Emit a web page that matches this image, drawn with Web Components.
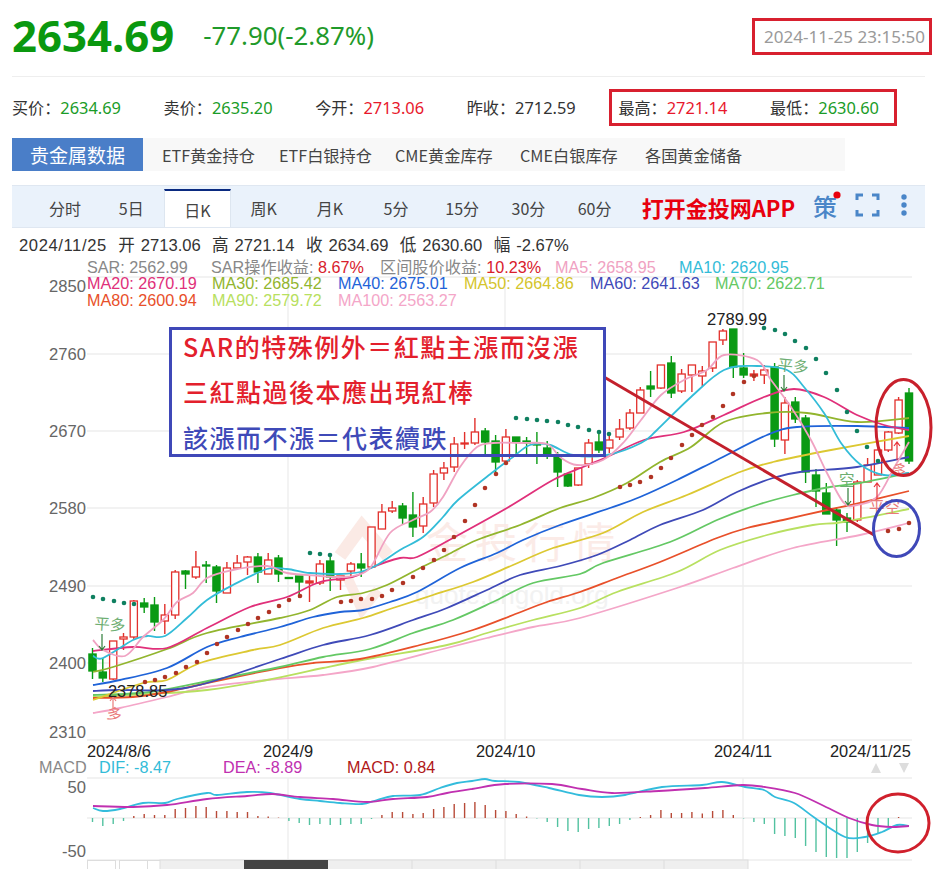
<!DOCTYPE html>
<html lang="zh">
<head>
<meta charset="utf-8">
<title>黄金行情</title>
<style>
  html, body { margin: 0; height: 869px; overflow: hidden; background: #fff; }
</style>
</head>
<body>
<gold-page>
  <quote-head price="2634.69" change="-77.90(-2.87%)" time="2024-11-25 23:15:50"></quote-head>
  <quote-stats>
    <stat-item label="买价" tone="down">2634.69</stat-item>
    <stat-item label="卖价" tone="down">2635.20</stat-item>
    <stat-item label="今开" tone="up">2713.06</stat-item>
    <stat-item label="昨收">2712.59</stat-item>
    <stat-item slot="marked" label="最高" tone="up">2721.14</stat-item>
    <stat-item slot="marked" label="最低" tone="down">2630.60</stat-item>
  </quote-stats>
  <metal-tabs title-text="贵金属数据">
    <span>ETF黄金持仓</span><span>ETF白银持仓</span><span>CME黄金库存</span><span>CME白银库存</span><span>各国黄金储备</span>
  </metal-tabs>
  <period-bar></period-bar>
  <day-info></day-info>
  <k-chart>
    <note-box>
      <span style="color:#e3202c">SAR的特殊例外＝紅點主漲而沒漲</span>
      <span style="color:#e3202c">三紅點過後本應出現紅棒</span>
      <span style="color:#3f4ab8">該漲而不漲＝代表續跌</span>
    </note-box>
  </k-chart>
</gold-page>

<script>
const CJK = '"Noto Sans CJK SC", "Noto Sans", sans-serif';
const ARIAL = '"Liberation Sans", "Noto Sans CJK SC", sans-serif';

class GoldPage extends HTMLElement {
  constructor() {
    super();
    this.attachShadow({ mode: "open" });
    this.shadowRoot.innerHTML = `
      <style>
        :host { display: block; width: 913px; padding: 0 19px 0 12px; font-family: ${CJK}; color: #333; }
      </style>
      <slot></slot>`;
  }
}

class QuoteHead extends HTMLElement {
  constructor() {
    super();
    this.attachShadow({ mode: "open" });
    this.shadowRoot.innerHTML = `
      <style>
        :host { display: flex; align-items: center; height: 76px; border-bottom: 1px solid #eee; }
        .price { font: 700 43.7px/1 "Noto Sans", sans-serif; color: #0a980f; margin-top: -4px; }
        .change { font: 400 25.8px/1 "Noto Sans", sans-serif; color: #1f9a2a; margin: -4px 0 0 29px; }
        .time {
          margin: -4px -7px 0 auto; padding: 0 4px 0 9px; height: 31px;
          border: 3px solid #d8202f; color: #9a9a9a; font: 400 17.05px/31px "Noto Sans", sans-serif;
        }
      </style>
      <span class="price"></span><span class="change"></span><span class="time"></span>`;
  }
  connectedCallback() {
    this.shadowRoot.querySelector(".price").textContent = this.getAttribute("price");
    this.shadowRoot.querySelector(".change").textContent = this.getAttribute("change");
    this.shadowRoot.querySelector(".time").textContent = this.getAttribute("time");
  }
}

class QuoteStats extends HTMLElement {
  constructor() {
    super();
    this.attachShadow({ mode: "open" });
    this.shadowRoot.innerHTML = `
      <style>
        :host { display: flex; align-items: center; height: 61px; }
        .marked { display: flex; position: relative; }
        /* red hand-drawn frame over the two values */
        .marked::after {
          content: ""; position: absolute; left: -9px; top: -7px; width: 282px; height: 31px; border: 3px solid #d8202f;
        }
      </style>
      <slot></slot>
      <div class="marked"><slot name="marked"></slot></div>`;
  }
}

class StatItem extends HTMLElement {
  constructor() {
    super();
    this.attachShadow({ mode: "open" });
    this.shadowRoot.innerHTML = `
      <style>
        :host { display: block; flex: 0 0 151.6px; width: 151.6px; font-size: 16.1px; line-height: 22px; color: #333; white-space: nowrap; }
        .val { font-family: "Noto Sans", sans-serif; font-size: 16.4px; color: #333; }
        :host([tone="up"]) .val { color: #e8182c; }
        :host([tone="down"]) .val { color: #1a9c28; }
      </style>
      <span class="lab"></span><span class="val"><slot></slot></span>`;
  }
  connectedCallback() {
    this.shadowRoot.querySelector(".lab").textContent = this.getAttribute("label") + "：";
  }
}

class MetalTabs extends HTMLElement {
  constructor() {
    super();
    this.attachShadow({ mode: "open" });
    this.shadowRoot.innerHTML = `
      <style>
        :host { display: flex; align-items: center; width: 833px; height: 33px; background: #f8f8f8; font-size: 16.2px; color: #444; white-space: nowrap; }
        .title {
          width: 131px; height: 33px; line-height: 33px; text-align: center; background: #4a7ec8;
          color: #fff; font-size: 19px; margin-right: 19px; flex: none;
        }
        .items { display: grid; grid-template-columns: 117px 116px 125px 125px auto; }
      </style>
      <div class="title"></div>
      <div class="items"><slot></slot></div>`;
  }
  connectedCallback() {
    this.shadowRoot.querySelector(".title").textContent = this.getAttribute("title-text");
  }
}

class PeriodBar extends HTMLElement {
  constructor() {
    super();
    this.attachShadow({ mode: "open" });
    const periods = ["分时", "5日", "日K", "周K", "月K", "5分", "15分", "30分", "60分"];
    const items = periods.map((p) => `<span class="p${p === "日K" ? " on" : ""}">${p}</span>`).join("");
    this.shadowRoot.innerHTML = `
      <style>
        :host {
          display: flex; align-items: flex-end; height: 41px; margin-top: 14px; padding-left: 20px;
          background: #eaf2fb; border-top: 1px solid #dfe7f1; border-bottom: 1px solid #dfe7f1; font-size: 16px; color: #444;
        }
        .p { width: 66.2px; height: 38px; line-height: 38px; text-align: center; box-sizing: border-box; padding-bottom: 4px; }
        .on { background: #fff; border-top: 2px solid #0a2a80; border-left: 1px solid #dde6f0; border-right: 1px solid #dde6f0; padding-bottom: 0; }
        .app { align-self: center; margin-left: 14px; font-size: 22px; font-weight: 700; color: #e8000e; white-space: nowrap; }
        svg { display: block; align-self: stretch; margin-left: auto; flex: none; }
      </style>
      ${items}
      <span class="app">打开金投网APP</span>
      <svg width="116" height="41" viewBox="0 0 116 41">
        <text x="4" y="30" font-size="24" font-weight="500" fill="#4a86c8" font-family='"Noto Sans CJK SC", sans-serif'>策</text>
        <circle cx="28" cy="9" r="3.6" fill="#e8000e"/>
        <path d="M48 14V9H54M63 9H69V14M69 24V29H63M54 29H48V24" fill="none" stroke="#4a86c8" stroke-width="3"/>
        <g fill="#4a86c8"><circle cx="95" cy="11" r="2.7"/><circle cx="95" cy="19" r="2.7"/><circle cx="95" cy="27" r="2.7"/></g>
      </svg>`;
  }
}

class DayInfo extends HTMLElement {
  constructor() {
    super();
    this.attachShadow({ mode: "open" });
    const parts = [["开", "2713.06"], ["高", "2721.14"], ["收", "2634.69"], ["低", "2630.60"], ["幅", "-2.67%"]];
    this.shadowRoot.innerHTML = `
      <style>
        :host { display: flex; align-items: center; gap: 11.3px; height: 20px; padding: 8px 0 0 7px; font: 16.6px/20px ${ARIAL}; color: #333; white-space: nowrap; }
        .date { letter-spacing: .6px; }
        .g { display: flex; gap: 6px; }
      </style>
      <span class="date">2024/11/25</span>
      ${parts.map((p) => `<span class="g"><span>${p[0]}</span><span>${p[1]}</span></span>`).join("")}`;
  }
}

class NoteBox extends HTMLElement {
  constructor() {
    super();
    this.attachShadow({ mode: "open" });
    this.shadowRoot.innerHTML = `
      <style>
        :host {
          position: absolute; left: 169px; top: 71px; width: 437px; height: 130px; box-sizing: border-box;
          border: 3px solid #3f48b8; padding-left: 11px; display: flex; flex-direction: column; justify-content: center;
          font: 500 25px/45.5px "Noto Sans CJK TC", "Noto Sans CJK SC", sans-serif; letter-spacing: 1.5px;
        }
        ::slotted(span) { display: block; white-space: nowrap; }
      </style>
      <slot></slot>`;
  }
}

// candle data, read off in page pixels: type, body top, body bottom, high, low
const CANDLES = [
  ["g",654,671,648,679],["g",672,678,658,682],["r",641,679,641,680],["r",637,639,633,650],["r",601,637,600,640],
  ["g",603,607,598,613],["g",605,622,597,631],["r",615,621,604,634],["r",572,615,570,619],["g",571,574,570,589],
  ["r",567,577,551,579],["g",565,566,561,583],["g",567,591,565,603],["r",568,593,562,593],["r",563,568,555,568],
  ["r",557,562,556,575],["g",557,572,553,583],["r",560,574,553,574],["g",558,574,555,582],["g",577.5,578.5,577,579],
  ["g",576,582,576,598],["R",581,583,575,602],["r",564,583,560,585],["g",561,577,553,591],["r",576,580,576,590],
  ["r",564,571,562,577],["g",564,568,553,577],["r",527,567,527,568],["r",512,529,504,529],["r",508,511,501,513],
  ["g",506,518,503,525],["g",515,527,492,537],["r",504,526,497,533],["r",474,503,470,507],["r",468,473,462,480],
  ["r",444,467,437,472],["r",443,444,432,449],["r",432,443,418,445],["g",431,442,428,455],["g",441,462,435,472],
  ["r",437,461,429,465],["g",437,442,437,455],["g",441,443,437,455],["g",444,445,432,464],["g",448,455,441,459],
  ["g",457,472,452,487],["g",474,486,474,487],["r",468,485,468,486],["r",443,464,439,468],["g",442,450,431,453],
  ["r",440,448,432,453],["r",429,437,419,440],["r",413,428,409,430],["r",390,413,387,413],["g",386,389,371,397],
  ["r",365,388,365,389],["g",363,393,356,398],["r",374,391,369,393],["r",365,375,365,392],["r",371,376,366,386],
  ["r",342,368,342,372],["r",331,340,329,345],["g",329,367,329,378],["g",368,375,353,378],["R",374,376,370,381],
  ["r",370,375,365,384],["g",367,439,363,447],["r",403,440,397,454],["g",402,419,397,423],["g",418,472,415,483],
  ["g",475,491,469,507],["g",493,514,483,514],["g",510,520,507,546],["g",518,522,513,532],["r",482,520,480,522],
  ["r",465,482,458,482],["r",450,475,442,475],["r",432,450,431,452],["r",400,433,397,434],["g",393,461,388,464],
];

// moving averages as hand-read control points, smoothed when drawn
const MAS = [
  ["#f4a6c8", [[93,713],[120,708],[167,697],[207,687],[267,680],[323,675],[373,667],[447,648],[487,638],[533,627],[580,618],[677,588],[733,568],[793,548],[860,535],[909,523]]],
  ["#b8e060", [[93,697],[167,693],[207,690],[267,680],[323,668],[373,658],[447,645],[487,633],[533,620],[580,608],[617,592],[677,572],[720,550],[767,535],[813,525],[843,522],[909,509]]],
  ["#e8502a", [[93,698],[133,697],[167,692],[207,683],[280,668],[313,663],[360,659],[420,645],[473,630],[513,615],[547,602],[580,592],[617,578],[660,562],[717,538],[747,528],[783,520],[827,510],[860,503],[909,491]]],
  ["#64c864", [[93,695],[150,692],[213,680],[280,667],[323,657],[370,649],[413,633],[453,620],[493,602],[533,583],[580,574],[603,563],[670,542],[717,520],[757,505],[793,495],[830,487],[860,483],[909,473]]],
  ["#3f4ab8", [[93,691],[120,690],[167,690],[207,683],[280,659],[323,645],[370,635],[413,620],[447,608],[487,590],[520,575],[560,566],[597,555],[630,540],[660,525],[703,510],[737,492],[773,478],[800,472],[857,467],[909,457]]],
  ["#dcc832", [[93,700],[143,683],[167,680],[200,663],[253,650],[280,645],[323,628],[363,618],[393,608],[433,595],[473,582],[513,565],[553,548],[603,533],[643,512],[687,495],[740,472],[773,462],[831,450],[909,436]]],
  ["#1f63d8", [[93,685],[120,680],[167,668],[207,647],[240,637],[280,627],[313,617],[340,612],[363,610],[390,602],[417,592],[460,568],[497,553],[523,540],[560,525],[610,508],[640,497],[677,480],[717,460],[767,435],[797,427],[857,426],[909,428]]],
  ["#92b52e", [[93,672],[113,667],[167,649],[207,633],[280,618],[310,610],[337,597],[363,593],[387,585],[420,568],[447,555],[477,540],[520,525],[560,508],[593,498],[627,483],[660,462],[691,447],[724,422],[767,413],[807,413],[857,422],[909,418]]],
  ["#e0307a", [[93,651],[133,647],[167,648],[207,628],[250,607],[287,597],[320,582],[353,577],[373,567],[400,558],[417,557],[453,538],[507,508],[553,480],[583,467],[607,457],[644,440],[684,432],[724,415],[764,397],[794,389],[824,397],[857,415],[884,425],[909,430]]],
  ["#33bcd8", [[93,656],[103,658],[133,640],[147,636],[165,636],[187,618],[207,600],[233,585],[267,569],[287,569],[310,573],[340,574],[360,572],[377,565],[400,550],[423,537],[443,517],[458,500],[493,472],[513,457],[530,445],[550,445],[573,455],[607,455],[641,443],[657,430],[691,397],[724,370],[757,366],[787,370],[804,387],[824,413],[841,443],[861,465],[884,475],[909,473]]],
  ["#f0a2c2", [[93,640],[103,650],[125,656],[143,637],[163,620],[177,602],[193,593],[207,578],[233,570],[267,566],[287,573],[320,576],[340,577],[353,576],[370,568],[390,533],[413,520],[430,512],[443,497],[460,467],[477,447],[493,443],[520,443],[547,444],[560,457],[577,465],[603,460],[624,442],[641,420],[661,395],[684,380],[707,370],[724,355],[757,360],[771,380],[791,407],[811,440],[827,473],[844,503],[857,505],[877,497],[894,468],[909,442]]],
];

const SAR_GREEN = [[93,597],[103,599],[114,601],[124,603],[134,604],[310,553],[320,554],[330,555],[516,418],[527,419],[537,420],[547,421],[558,422],[568,425],[578,427],[589,430],[599,432],[609,434],[764,328],[775,330],[785,334],[795,341],[806,348],[816,359],[826,373],[837,390],[847,412],[857,431],[867,447],[878,461]];
const SAR_RED = [[145,682],[155,680],[165,677],[176,673],[186,667],[197,662],[207,653],[217,644],[227,637],[238,630],[248,624],[258,618],[269,612],[279,606],[289,600],[300,596],[341,602],[351,601],[361,599],[372,599],[382,596],[392,590],[403,583],[413,577],[423,568],[434,560],[444,550],[454,537],[465,521],[475,505],[485,488],[496,474],[506,463],[620,487],[630,485],[640,482],[651,477],[661,468],[671,458],[682,445],[692,435],[702,425],[713,417],[723,406],[733,394],[744,382],[754,376],[888,531],[899,529],[909,523]];

const DIF = [[93,808],[103,811],[120,809],[143,803],[165,803],[177,799],[207,793],[217,795],[247,792],[270,793],[300,799],[320,801],[340,803],[362,804],[377,800],[393,796],[420,795],[440,788],[457,783],[472,781],[485,779],[495,781],[519,782],[549,788],[579,795],[602,797],[625,795],[662,787],[702,785],[722,782],[745,787],[764,790],[775,797],[794,803],[815,818],[845,837],[865,837],[882,832],[897,825],[909,826]];
const DEA = [[93,806],[133,807],[167,805],[207,799],[247,796],[273,794],[300,797],[333,799],[367,802],[393,799],[427,797],[447,793],[472,789],[505,784],[552,784],[582,789],[612,793],[659,791],[705,788],[742,785],[765,787],[795,793],[822,805],[849,818],[872,825],[892,827],[909,826]];

// MACD histogram, pixels below (+) or above (-) the zero line, one per candle
const BARS = [4,8,6,3,-2,-4,-3,-3,-9,-10,-12,-11,-7,-7,-6,-6,-2,-1.5,-.4,3,5,7,6,7,7,6,6,1,-3,-6,-6,-4,-5,-9,-11,-14,-15,-16,-13,-8,-7,-4,-1.5,.5,4,9,13,14,11,10,8,6,2,-1,-3,-8,-5,-5,-6,-4.5,-7,-8,-3,.5,4,6,16,18,20,28,34,39,40,40,34,25,15,8,-1,0];

function smooth(pts) {
  let d = `M${pts[0][0]} ${pts[0][1]}`;
  for (let i = 0; i < pts.length - 1; i++) {
    const p0 = pts[i - 1] || pts[i], p1 = pts[i], p2 = pts[i + 1], p3 = pts[i + 2] || p2;
    const c1x = p1[0] + (p2[0] - p0[0]) / 6, c1y = p1[1] + (p2[1] - p0[1]) / 6;
    const c2x = p2[0] - (p3[0] - p1[0]) / 6, c2y = p2[1] - (p3[1] - p1[1]) / 6;
    d += `C${c1x.toFixed(1)} ${c1y.toFixed(1)} ${c2x.toFixed(1)} ${c2y.toFixed(1)} ${p2[0]} ${p2[1]}`;
  }
  return d;
}

const candleX = (i) => 92.5 + i * 10.335;

class KChart extends HTMLElement {
  constructor() {
    super();
    this.attachShadow({ mode: "open" });
    this.shadowRoot.innerHTML = `
      <style>
        :host { display: block; position: relative; width: 944px; height: 613px; margin-left: -12px; }
        svg { display: block; font-family: ${ARIAL}; }
        text { white-space: pre; }
      </style>
      <svg width="944" height="613" viewBox="0 256 944 613">${this.drawing()}</svg>
      <slot></slot>`;
  }

  label(x, y, txt, fill, size = 16.2, anchor = "start") {
    return `<text x="${x}" y="${y}" fill="${fill}" font-size="${size}" text-anchor="${anchor}">${txt}</text>`;
  }

  grid() {
    let s = `<g stroke="#eeeeee" stroke-width="1.4" fill="none">`;
    [277, 354, 431, 508, 586, 663, 740, 778, 818, 860].forEach((y) => { s += `<path d="M87 ${y}H912"/>`; });
    [288, 505, 743].forEach((x) => { s += `<path d="M${x} 277V740M${x} 778V860"/>`; });
    s += `</g>`;
    // the pasted note hides the grid, the candles were drawn back over it
    s += `<rect x="169" y="327" width="437" height="130" fill="#fff"/>`;
    return s;
  }

  watermark() {
    return `<g opacity=".9">
      <path d="M340 556L362 526L388 556" fill="none" stroke="#fbe8e3" stroke-width="13"/>
      <path d="M345 572L362 610L378 590" fill="none" stroke="#fbe8e3" stroke-width="10"/>
      <text x="426" y="558" font-size="42" letter-spacing="7" fill="#fbe9e5" font-family='"Noto Sans CJK SC", sans-serif'>金投行情</text>
      <text x="415" y="604" font-size="26" fill="#f1f1f1">quote.cngold.org</text>
    </g>`;
  }

  candles() {
    return CANDLES.map((c, i) => {
      const x = candleX(i).toFixed(1), col = c[0] === "g" ? "#0a9a14" : "#e2302c";
      const w = `<path d="M${x} ${c[3]}V${c[4]}" stroke="${col}" stroke-width="1.4"/>`;
      const fill = c[0] === "r" ? "#fff" : col;
      const h = Math.max(c[2] - c[1], 1);
      return w + `<rect x="${(x - 3.6).toFixed(1)}" y="${c[1]}" width="7.2" height="${h}" fill="${fill}" stroke="${col}" stroke-width="1.3"/>`;
    }).join("");
  }

  lines() {
    return MAS.map((m) => `<path d="${smooth(m[1])}" fill="none" stroke="${m[0]}" stroke-width="1.8"/>`).join("");
  }

  dots() {
    const dot = (p, c) => `<circle cx="${p[0]}" cy="${p[1]}" r="2.3" fill="${c}"/>`;
    return SAR_GREEN.map((p) => dot(p, "#0f8060")).join("") + SAR_RED.map((p) => dot(p, "#b03424")).join("");
  }

  legend() {
    const rows = [
      [273, [[87, "SAR: 2562.99", "#888"], [211, "SAR操作收益: <tspan fill='#d8202c'>8.67%</tspan>", "#888"], [380, "区间股价收益: <tspan fill='#d8202c'>10.23%</tspan>", "#888"], [555, "MA5: 2658.95", "#f0a2c2"], [679, "MA10: 2620.95", "#33bcd8"]]],
      [289, [[87, "MA20: 2670.19", "#e0307a"], [212, "MA30: 2685.42", "#92b52e"], [338, "MA40: 2675.01", "#1f63d8"], [464, "MA50: 2664.86", "#d4c52c"], [590, "MA60: 2641.63", "#3f4ab8"], [715, "MA70: 2622.71", "#64c864"]]],
      [306, [[87, "MA80: 2600.94", "#e8502a"], [212, "MA90: 2579.72", "#b8e060"], [338, "MA100: 2563.27", "#f4a6c8"]]],
    ];
    return rows.map((r) => r[1].map((t) => this.label(t[0], r[0], t[1], t[2])).join("")).join("");
  }

  axis() {
    const ys = [[292, 2850], [360, 2760], [437, 2670], [514, 2580], [592, 2490], [669, 2400], [738, 2310]];
    let s = ys.map((a) => this.label(86, a[0], a[1], "#666", 16.6, "end")).join("");
    [[87, "2024/8/6"], [263, "2024/9"], [476, "2024/10"], [714, "2024/11"], [830, "2024/11/25"]].forEach((d) => {
      s += this.label(d[0], 757, d[1], "#222", 16.4);
    });
    s += this.label(86, 793, "50", "#666", 16.6, "end") + this.label(86, 857, "-50", "#666", 16.6, "end");
    s += this.label(39, 773, "MACD", "#888");
    s += this.label(99, 773, "DIF: -8.47", "#33bcd8");
    s += this.label(223, 773, "DEA: -8.89", "#c030b0");
    s += this.label(347, 773, "MACD: 0.84", "#b01818");
    s += `<path d="M876 763L881 773H871ZM899 763H909L904 773Z" fill="#dddddd"/>`;
    s += this.label(707, 325, "2789.99", "#222", 16.6);
    return s;
  }

  macd() {
    let s = BARS.map((b, i) => {
      const x = candleX(i).toFixed(1);
      return `<path d="M${x} 818V${818 + b}" stroke="${b > 0 ? "#52c2a0" : "#b84a38"}" stroke-width="1.4"/>`;
    }).join("");
    s += `<path d="${smooth(DIF)}" fill="none" stroke="#33bcdc" stroke-width="1.8"/>`;
    s += `<path d="${smooth(DEA)}" fill="none" stroke="#c030b0" stroke-width="1.8"/>`;
    return s;
  }

  trades() {
    const cjk = (x, y, t, c, size = 15, rot = 0) =>
      `<text x="${x}" y="${y}" fill="${c}" font-size="${size}" transform="rotate(${rot} ${x} ${y})" font-family='"Noto Sans CJK SC", sans-serif'>${t}</text>`;
    const down = (x, y1, y2, c) => `<path d="M${x} ${y1}V${y2}M${x - 3} ${y2 - 4}L${x} ${y2}L${x + 3} ${y2 - 4}" fill="none" stroke="${c}" stroke-width="1.2"/>`;
    const up = (x, y1, y2, c) => `<path d="M${x} ${y1}V${y2}M${x - 3} ${y2 + 4}L${x} ${y2}L${x + 3} ${y2 + 4}" fill="none" stroke="${c}" stroke-width="1.2"/>`;
    const g = "#6eae72", r = "#ea7a7a";
    let s = "";
    s += cjk(94, 629, "平多", g, 15.5, 4) + down(102, 634, 650, "#2f7d3a");
    s += cjk(777, 370, "平多", g, 15.5, 6) + down(784, 375, 391, "#2f7d3a");
    s += cjk(839, 486, "空", g, 15.5) + down(848, 488, 505, "#2f7d3a");
    s += up(113, 708, 697, r) + cjk(106, 718, "多", r, 15, 10);
    s += up(877, 499, 483, "#e8323a") + cjk(869, 513, "平空", r, 15.5);
    s += up(897, 460, 442, "#e8323a") + cjk(891, 472, "多", r, 14, 20);
    s += this.label(108, 697, "2378.85", "#222", 16.4);
    return s;
  }

  marks() {
    return `<path d="M604 377L874 535" stroke="#c3202c" stroke-width="3" fill="none"/>
      <ellipse cx="903.5" cy="427.5" rx="27.5" ry="48" fill="none" stroke="#c8202c" stroke-width="3"/>
      <ellipse cx="896.5" cy="528.5" rx="23" ry="28" fill="none" stroke="#3f48b8" stroke-width="3"/>
      <ellipse cx="898" cy="823" rx="31" ry="29" fill="none" stroke="#d0202c" stroke-width="3"/>`;
  }

  scroller() {
    let s = `<g fill="#fff" stroke="#dddddd"><rect x="87.5" y="860.5" width="28" height="10"/><rect x="119.5" y="860.5" width="28" height="10"/><rect x="147.5" y="860.5" width="13" height="10"/></g>`;
    s += `<rect x="160" y="860" width="588" height="10" fill="#efefef" stroke="#dddddd"/>`;
    s += `<rect x="244" y="860" width="84" height="10" fill="#444"/>`;
    [412, 496, 580, 664].forEach((x) => { s += `<path d="M${x} 860V870" stroke="#dddddd"/>`; });
    return s;
  }

  drawing() {
    return this.grid() + this.watermark() + this.legend() + this.candles() + this.lines() + this.dots()
      + this.trades() + this.axis() + this.macd() + this.scroller() + this.marks();
  }
}

customElements.define("gold-page", GoldPage);
customElements.define("quote-head", QuoteHead);
customElements.define("quote-stats", QuoteStats);
customElements.define("stat-item", StatItem);
customElements.define("metal-tabs", MetalTabs);
customElements.define("period-bar", PeriodBar);
customElements.define("day-info", DayInfo);
customElements.define("note-box", NoteBox);
customElements.define("k-chart", KChart);
</script>
</body>
</html>
